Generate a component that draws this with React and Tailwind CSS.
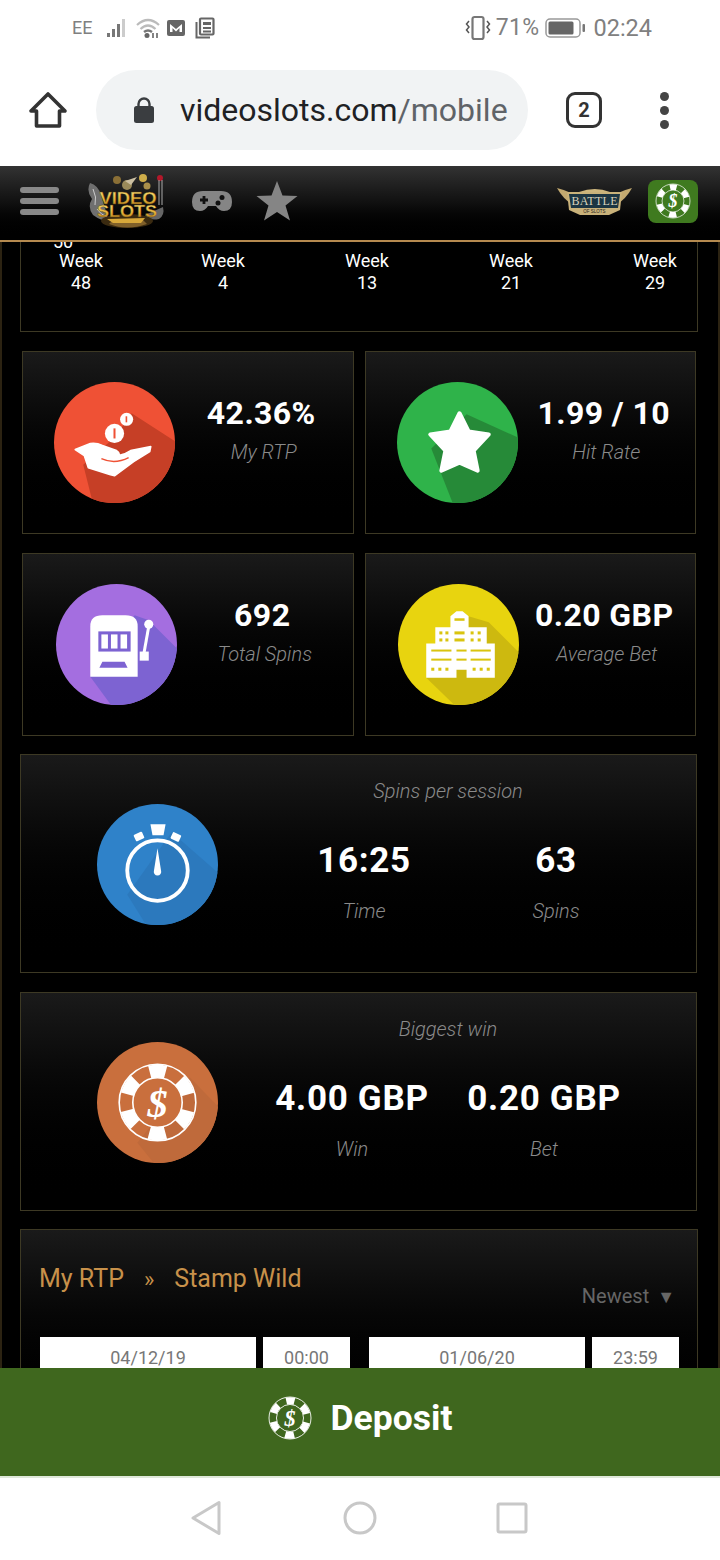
import React from "react";

const R = { fontFamily: "Roboto, 'Liberation Sans', sans-serif" };

function Disc({ id, color, shadow, points, children, className = "" }) {
  return (
    <svg viewBox="0 0 120 120" className={`w-[121px] h-[121px] shrink-0 ${className}`}>
      <defs>
        <clipPath id={id}><circle cx="60" cy="60" r="60" /></clipPath>
      </defs>
      <circle cx="60" cy="60" r="60" fill={color} />
      <polygon points={points} fill={shadow} clipPath={`url(#${id})`} />
      {children}
    </svg>
  );
}

function ChipArt({ cx, cy, r, bg, fg = "#fff" }) {
  const k = r / 38;
  const rb = 31 * k;
  const c = 2 * Math.PI * rb;
  const unit = c / 6;
  return (
    <g>
      <circle cx={cx} cy={cy} r={r} fill="none" stroke={fg} strokeWidth={1.6 * k} />
      <circle cx={cx} cy={cy} r={rb} fill="none" stroke={fg} strokeWidth={13 * k}
        strokeDasharray={`${unit * 0.5} ${unit * 0.5}`} strokeDashoffset={unit * 0.25}
        transform={`rotate(-90 ${cx} ${cy})`} />
      <circle cx={cx} cy={cy} r={24.5 * k} fill={bg} stroke={fg} strokeWidth={1.6 * k} />
      <text x={cx} y={cy + 14 * k} textAnchor="middle" fontSize={40 * k} fontWeight="700" fontStyle="italic"
        fill={fg} fontFamily="'Liberation Serif', serif">$</text>
    </g>
  );
}

const HandIcon = () => (
  <Disc id="c1" color="#ef5135" shadow="#c63f26" points="77,31 122,60 122,122 39,122 29,82 60,55">
    <path d="M21 67 L36 61 Q42 60 48 63 L62 68 Q66 71 64 73 Q70 72 76 68 L96 64 L95 69 L79 79 L60 93 L56 92 L34 85 L30 73 Z" fill="#fff" stroke="#fff" strokeWidth="1.500" strokeLinejoin="round" />
    <path d="M47 76 Q60 82 74 75" stroke="#ef5135" strokeWidth="1.500" fill="none" />
    <circle cx="60" cy="51" r="9.500" fill="#fff" />
    <rect x="59" y="46" width="2" height="10" fill="#ef5135" />
    <circle cx="72" cy="37" r="6.500" fill="#fff" />
    <rect x="71" y="34" width="1.600" height="6" fill="#ef5135" />
  </Disc>
);

const StarIcon = () => (
  <Disc id="c2" color="#2fb34a" shadow="#268a38" points="69,32 122,56 122,122 56,122 34,66">
    <polygon points="62,31 71,49 91,52 76,68 80,88 62,80 44,88 48,68 33,52 53,49" fill="#fff" stroke="#fff" strokeWidth="4" strokeLinejoin="round" />
  </Disc>
);

const SlotIcon = () => (
  <Disc id="c3" color="#a46ee0" shadow="#7d63d2" points="78,31 92,36 122,66 122,122 56,122 34,92">
    <path d="M34 42 Q34 31 46 31 L69 31 Q81 31 81 42 L81 92 L34 92 Z" fill="#fff" />
    <rect x="42" y="47" width="32" height="20" fill="#7d63d2" />
    <rect x="45" y="50" width="6.500" height="14" fill="#fff" />
    <rect x="54.500" y="50" width="6.500" height="14" fill="#fff" />
    <rect x="64" y="50" width="6.500" height="14" fill="#fff" />
    <polygon points="46,77 68,77 71,83 43,83" fill="#7d63d2" />
    <circle cx="92" cy="40" r="4.500" fill="#fff" />
    <path d="M92 42 L87 70" stroke="#fff" strokeWidth="3" />
    <rect x="83" y="67" width="9" height="9" fill="#fff" />
  </Disc>
);

const BuildingIcon = () => (
  <Disc id="c4" color="#e8d40f" shadow="#cdb90f" points="70,32 90,38 122,70 122,122 58,122 28,93">
    <path d="M28 59 H37 V43 H52 V32 L58 27 H64 L70 32 V43 H88 V59 H96 V93 H68 V85 H58 V93 H28 Z" fill="#fff" />
    <g fill="#d9c40f">
      <rect x="56" y="34" width="10" height="2.500" />
      <rect x="41" y="47" width="3" height="3" /><rect x="47" y="47" width="3" height="3" />
      <rect x="56" y="47" width="10" height="3" />
      <rect x="72" y="47" width="3" height="3" /><rect x="79" y="47" width="3" height="3" />
      <rect x="41" y="54" width="3" height="3" /><rect x="47" y="54" width="3" height="3" />
      <rect x="56" y="54" width="10" height="3" />
      <rect x="72" y="54" width="3" height="3" /><rect x="79" y="54" width="3" height="3" />
      <rect x="33" y="65" width="20" height="2" /><rect x="58" y="65" width="10" height="2" /><rect x="72" y="65" width="20" height="2" />
      <rect x="33" y="74" width="20" height="2" /><rect x="58" y="74" width="10" height="2" /><rect x="72" y="74" width="20" height="2" />
      <rect x="33" y="83" width="3" height="3" /><rect x="40" y="83" width="3" height="3" /><rect x="47" y="83" width="3" height="3" />
      <rect x="74" y="83" width="3" height="3" /><rect x="81" y="83" width="3" height="3" /><rect x="88" y="83" width="3" height="3" />
    </g>
  </Disc>
);

const WatchIcon = () => (
  <Disc id="c5" color="#2f82c9" shadow="#2c79bd" points="74,28 122,70 122,122 50,122 30,90">
    <circle cx="60" cy="66" r="30" fill="none" stroke="#fff" strokeWidth="3.800" />
    <polygon points="53,20 68,20 66,31 55,31" fill="#fff" />
    <rect x="37" y="29" width="9" height="7" rx="1" fill="#fff" transform="rotate(-25 41 32)" />
    <rect x="74" y="29" width="9" height="7" rx="1" fill="#fff" transform="rotate(25 78 32)" />
    <path d="M60 44 L63.500 66 A3.700 3.700 0 1 1 56.500 66 Z" fill="#fff" />
  </Disc>
);

const ChipIcon = () => (
  <Disc id="c6" color="#c96f3d" shadow="#bf6a3b" points="92,35 122,66 122,122 58,122 40,100">
    <ChipArt cx={60} cy={60} r={38} bg="#c96f3d" />
  </Disc>
);

function StatCard({ icon, value, label, iconMl = "ml-[31px]" }) {
  return (
    <div className="h-[183px] bg-gradient-to-b from-[#1a1a1a] to-black border border-[#3d3924] flex items-center">
      <div className={`${iconMl} shrink-0`}>{icon}</div>
      <div className="flex-1 flex flex-col items-center -mt-[22px]">
        <div className="text-[32px] leading-[40px] font-bold text-white tracking-[0.4px] pr-[5px] whitespace-nowrap">{value}</div>
        <div className="text-[20px] leading-[38px] italic font-light text-[#8a8a8a] whitespace-nowrap">{label}</div>
      </div>
    </div>
  );
}

function WideCard({ icon, title, cols, shift }) {
  return (
    <div className="ml-[18px] w-[677px] h-[219px] bg-gradient-to-b from-[#1a1a1a] to-black border border-[#3d3924] flex">
      <div className="ml-[76px] shrink-0 flex items-center pt-[2px]">{icon}</div>
      <div className="w-[460px] flex flex-col items-center pt-[22px]">
        <div className="text-[20px] leading-[28px] italic font-light text-[#8a8a8a]">{title}</div>
        <div className={`mt-[35px] grid grid-cols-2 w-[384px] ${shift}`}>
          {cols.map((c) => (
            <div key={c[1]} className="flex flex-col items-center">
              <div className="text-[35px] leading-[42px] font-bold text-white tracking-[0.7px] whitespace-nowrap">{c[0]}</div>
              <div className="mt-[14px] text-[20px] leading-[30px] italic font-light text-[#8a8a8a]">{c[1]}</div>
            </div>
          ))}
        </div>
      </div>
    </div>
  );
}

function DateBox({ w, children, className = "" }) {
  return (
    <div className={`${w} h-[40px] bg-white text-[#777] text-[18px] leading-[42px] text-center shrink-0 ${className}`}>{children}</div>
  );
}

function StatusIcons() {
  return (
    <div className="flex items-center">
      <svg width="22" height="22" viewBox="0 0 22 22" className="ml-[14px]">
        <rect x="1" y="16" width="3" height="4" fill="#777" />
        <rect x="6" y="12" width="3" height="8" fill="#777" />
        <rect x="11" y="7" width="3" height="13" fill="#777" />
        <rect x="16" y="2" width="3" height="18" fill="#ccc" />
      </svg>
      <svg width="24" height="22" viewBox="0 0 24 22" className="ml-[8px]" fill="none">
        <path d="M1 8 Q12 -2 23 8" stroke="#bbb" strokeWidth="2.200" />
        <path d="M4.500 12 Q12 5 19.500 12" stroke="#bbb" strokeWidth="2.200" />
        <path d="M8 15 Q12 12 16 15" stroke="#777" strokeWidth="2.500" />
        <circle cx="11" cy="18.500" r="2.500" fill="#666" />
        <path d="M17 16 V21 M21 16 V21" stroke="#777" strokeWidth="1.800" />
      </svg>
      <svg width="20" height="18" viewBox="0 0 20 18" className="ml-[6px]">
        <rect x="1" y="1" width="18" height="16" rx="2" fill="#666" />
        <path d="M4 5 L10 10 L16 5 V13 H13.500 V9 L10 12.500 L6.500 9 V13 H4 Z" fill="#fff" />
      </svg>
      <svg width="20" height="22" viewBox="0 0 20 22" className="ml-[9px]" fill="none">
        <rect x="5" y="1.500" width="13.500" height="16" rx="1" stroke="#666" strokeWidth="2.200" />
        <path d="M1.500 5 V20.500 H15" stroke="#666" strokeWidth="2" />
        <rect x="8" y="5" width="8" height="3" fill="#666" />
        <rect x="8" y="10" width="8" height="2" fill="#666" />
        <rect x="8" y="13.500" width="8" height="2" fill="#666" />
      </svg>
    </div>
  );
}

function Logo() {
  return (
    <svg width="80" height="60" viewBox="0 0 80 60" className="ml-[28px] shrink-0">
      <defs>
        <linearGradient id="lg" x1="0" y1="0" x2="0" y2="1">
          <stop offset="0" stopColor="#f8e07a" />
          <stop offset="0.6" stopColor="#e2ae35" />
          <stop offset="1" stopColor="#a8741c" />
        </linearGradient>
      </defs>
      <path d="M3 12 Q-1 20 5 28 Q0 36 6 44 Q14 50 22 50 L14 24 Q11 14 3 12 Z" fill="#6f6f6f" />
      <path d="M6 18 Q10 26 8 34 M10 38 Q14 44 20 46" stroke="#ccc" strokeWidth="1" fill="none" />
      <path d="M76 36 Q78 44 72 48 Q62 50 58 44 Z" fill="#666" />
      <ellipse cx="40" cy="50" rx="26" ry="7" fill="#3a2a10" />
      <path d="M22 53 Q40 60 60 53 L56 49 H26 Z" fill="#80602a" />
      <path d="M20 48 L58 47 L54 52 H26 Z" fill="#d8a83a" />
      <circle cx="30" cy="9" r="4" fill="#8a6f36" />
      <circle cx="40" cy="14" r="5" fill="#9a8a5a" />
      <circle cx="56" cy="7" r="4" fill="#cfae4a" />
      <circle cx="60" cy="15" r="3.500" fill="#a98f4a" />
      <path d="M38 10 L50 6 L44 14 Z" fill="#cbbfa2" />
      <circle cx="73" cy="7" r="3" fill="#b3182a" />
      <path d="M72 9 V34 M75 9 V34" stroke="#aaa" strokeWidth="1" />
      <text x="41" y="33" textAnchor="middle" fontSize="16" fontWeight="700" fill="url(#lg)" stroke="#5c3d0c" strokeWidth="0.300" fontFamily="'Liberation Sans', sans-serif" textLength="57" lengthAdjust="spacingAndGlyphs">VIDEO</text>
      <text x="40" y="46" textAnchor="middle" fontSize="16" fontWeight="700" fill="url(#lg)" stroke="#5c3d0c" strokeWidth="0.300" fontFamily="'Liberation Sans', sans-serif" textLength="60" lengthAdjust="spacingAndGlyphs">SLOTS</text>
    </svg>
  );
}

function BattleLogo() {
  return (
    <svg width="76" height="28" viewBox="0 0 76 28" className="shrink-0">
      <path d="M0 1 Q8 3 14 6 L16 18 Q6 12 0 1 Z" fill="#c4aa70" />
      <path d="M75 1 Q67 3 61 6 L59 18 Q69 12 75 1 Z" fill="#c4aa70" />
      <path d="M22 5 Q38 -1 53 5 Z" fill="#cdb67d" />
      <path d="M10 5 H65 L63 23 L52 28 H23 L12 23 Z" fill="#c9b27a" />
      <path d="M12 7 H63 L61 21 H14 Z" fill="#1b3542" />
      <text x="37.500" y="18" textAnchor="middle" fontSize="12" fill="#d8d2bb" fontFamily="'Liberation Serif', serif" textLength="46" lengthAdjust="spacing">BATTLE</text>
      <text x="37.500" y="25.800" textAnchor="middle" fontSize="4.500" fill="#27231a" fontFamily="'Liberation Sans', sans-serif">OF SLOTS</text>
    </svg>
  );
}

export default function App() {
  return (
    <div style={R} className="w-[720px] h-[1560px] flex flex-col overflow-hidden bg-white">
      {/* status bar */}
      <div className="h-[56px] flex items-center pl-[72px] pr-[68px] text-[#808080] shrink-0">
        <span className="text-[18px] leading-[22px]">EE</span>
        <StatusIcons />
        <div className="ml-auto flex items-center">
          <svg width="26" height="26" viewBox="0 0 26 26" fill="none">
            <rect x="7.500" y="2" width="11" height="22" rx="2" stroke="#777" strokeWidth="2.200" />
            <path d="M4 6 L1.500 9 L4 12 L1.500 15 L4 18" stroke="#555" strokeWidth="1.500" />
            <path d="M22 6 L24.500 9 L22 12 L24.500 15 L22 18" stroke="#555" strokeWidth="1.500" />
          </svg>
          <span className="ml-[5px] text-[23px] leading-[28px] tracking-[0.3px]">71%</span>
          <svg width="42" height="22" viewBox="0 0 42 22" className="ml-[6px]" fill="none">
            <rect x="1" y="2" width="34" height="18" rx="4" stroke="#999" strokeWidth="1.500" />
            <rect x="3.500" y="4.500" width="25" height="13" rx="1.500" fill="#666" />
            <rect x="37.500" y="7" width="2.500" height="8" rx="1" fill="#777" />
          </svg>
          <span className="ml-[6px] text-[23.500px] leading-[28px]">02:24</span>
        </div>
      </div>
      {/* browser bar */}
      <div className="h-[110px] flex items-center shrink-0 pb-[2px]">
        <svg width="40" height="40" viewBox="0 0 40 40" className="ml-[28px]" fill="none">
          <path d="M20 4 L37 21 H31.500 V36 H8.500 V21 H3 Z" stroke="#333" strokeWidth="3.600" strokeLinejoin="round" />
        </svg>
        <div className="ml-[28px] w-[432px] h-[80px] rounded-full bg-[#f1f3f4] flex items-center pl-[37px]">
          <svg width="22" height="28" viewBox="0 0 22 28">
            <path d="M5.500 12 V8 A5.500 5.500 0 0 1 16.500 8 V12" fill="none" stroke="#3a3d40" strokeWidth="2.400" />
            <rect x="1" y="10" width="20" height="17" rx="2.500" fill="#3a3d40" />
          </svg>
          <span className="ml-[25px] text-[32px] leading-[40px] text-[#202124] whitespace-nowrap">
            videoslots.com<span className="text-[#5f6368]">/mobile</span>
          </span>
        </div>
        <div className="ml-[38px] w-[36px] h-[36px] rounded-[9px] border-[3.500px] border-[#333] flex items-center justify-center text-[20px] font-bold text-[#333]">2</div>
        <div className="ml-[58px] flex flex-col gap-[5px]">
          <div className="w-[9px] h-[9px] rounded-full bg-[#444]" />
          <div className="w-[9px] h-[9px] rounded-full bg-[#444]" />
          <div className="w-[9px] h-[9px] rounded-full bg-[#444]" />
        </div>
      </div>
      {/* site header */}
      <div className="h-[76px] shrink-0 bg-gradient-to-b from-[#333] via-[#101010] to-black border-b-2 border-[#b58a4f] flex items-center pb-[4px]">
        <div className="ml-[20px] flex flex-col gap-[5px]">
          <div className="w-[39px] h-[6px] rounded-full bg-[#888]" />
          <div className="w-[39px] h-[6px] rounded-full bg-[#888]" />
          <div className="w-[39px] h-[6px] rounded-full bg-[#888]" />
        </div>
        <Logo />
        <svg width="42" height="24" viewBox="0 0 42 24" className="ml-[24px] shrink-0">
          <path d="M12 2 H30 Q41 2 41 13 Q41 22 33 22 Q28 22 25 17 H17 Q14 22 9 22 Q1 22 1 13 Q1 2 12 2 Z" fill="#858585" />
          <path d="M9 11 H17 M13 7 V15" stroke="#111" strokeWidth="2.800" />
          <circle cx="31" cy="8.500" r="2.500" fill="#111" />
          <circle cx="27" cy="14" r="2.500" fill="#111" />
        </svg>
        <svg width="42" height="40" viewBox="0 0 42 40" className="ml-[23px] shrink-0">
          <polygon points="21,0 26.500,14.500 41.500,15 29.500,24.500 34,39.500 21,31 8,39.500 12.500,24.500 0.500,15 15.500,14.500" fill="#858585" />
        </svg>
        <div className="ml-auto flex items-center pr-[22px]">
          <BattleLogo />
          <div className="ml-[15px] w-[50px] h-[43px] rounded-[8px] bg-[#3f7a1f] flex items-center justify-center">
            <svg width="36" height="36" viewBox="0 0 36 36"><ChipArt cx={18} cy={18} r={17} bg="#3f7a1f" /></svg>
          </div>
        </div>
      </div>
      {/* scrolling content */}
      <div className="flex-1 min-h-0 overflow-hidden bg-black border-x-2 border-[#2c2312]">
        <div className="ml-[18px] w-[678px] h-[90px] border-x border-b border-[#3d3924] overflow-hidden text-white text-[18px] leading-[22px]">
          <div className="-mt-[11px] ml-[32px] h-[19px]">50</div>
          <div className="flex -ml-[10px] w-[720px]">
            {[["Week", "48", "w-[140px]"], ["Week", "4", "w-[144px]"], ["Week", "13", "w-[144px]"], ["Week", "21", "w-[144px]"], ["Week", "29", "w-[144px]"]].map((w) => (
              <div key={w[1]} className={`${w[2]} text-center`}>
                <div>{w[0]}</div>
                <div>{w[1]}</div>
              </div>
            ))}
          </div>
        </div>
        <div className="mt-[19px] ml-[20px] w-[674px] grid grid-cols-2 gap-x-[11px] gap-y-[19px]">
          <StatCard icon={<HandIcon />} value="42.36%" label="My RTP" />
          <StatCard icon={<StarIcon />} value="1.99 / 10" label="Hit Rate" />
          <StatCard icon={<SlotIcon />} value="692" label="Total Spins" iconMl="ml-[33px]" />
          <StatCard icon={<BuildingIcon />} value="0.20 GBP" label="Average Bet" iconMl="ml-[32px]" />
        </div>
        <div className="mt-[18px]">
          <WideCard icon={<WatchIcon />} title="Spins per session" cols={[["16:25", "Time"], ["63", "Spins"]]} shift="ml-[24px]" />
        </div>
        <div className="mt-[19px]">
          <WideCard icon={<ChipIcon />} title="Biggest win" cols={[["4.00 GBP", "Win"], ["0.20 GBP", "Bet"]]} shift="" />
        </div>
        <div className="mt-[18px] ml-[18px] w-[678px] h-[200px] bg-gradient-to-b from-[#1a1a1a] to-black border border-[#3d3924] pt-[32px]">
          <div className="flex pl-[18px] pr-[22px]">
            <div className="text-[25px] leading-[34px] text-[#c8914a] whitespace-nowrap">
              My RTP<span className="mx-[20px] text-[22px]">»</span>Stamp Wild
            </div>
            <div className="ml-auto mt-[19px] text-[20px] leading-[30px] text-[#666] whitespace-nowrap">
              Newest <span className="ml-[3px] text-[18px]">▼</span>
            </div>
          </div>
          <div className="mt-[25px] flex pl-[19px]">
            <DateBox w="w-[216px]">04/12/19</DateBox>
            <DateBox w="w-[87px]" className="ml-[7px]">00:00</DateBox>
            <DateBox w="w-[216px]" className="ml-[19px]">01/06/20</DateBox>
            <DateBox w="w-[87px]" className="ml-[7px]">23:59</DateBox>
          </div>
        </div>
      </div>
      {/* deposit */}
      <div className="h-[110px] shrink-0 bg-[#3f671e] border-b-2 border-[#dfe8da] flex items-center justify-center gap-[19px] pb-[8px]">
        <svg width="44" height="44" viewBox="0 0 44 44"><ChipArt cx={22} cy={22} r={21} bg="#3f671e" /></svg>
        <span className="text-[35.500px] leading-[44px] font-bold text-white">Deposit</span>
      </div>
      {/* nav */}
      <div className="h-[82px] shrink-0 bg-white flex items-center pb-[2px]">
        <svg width="32" height="36" viewBox="0 0 32 36" className="ml-[190px]" fill="none">
          <path d="M29 2.500 V33.500 L3 18 Z" stroke="#c8c8c8" strokeWidth="3" strokeLinejoin="round" />
        </svg>
        <svg width="34" height="34" viewBox="0 0 34 34" className="ml-[121px]" fill="none">
          <circle cx="17" cy="17" r="15" stroke="#c8c8c8" strokeWidth="3" />
        </svg>
        <svg width="32" height="32" viewBox="0 0 32 32" className="ml-[119px]" fill="none">
          <rect x="2" y="2" width="28" height="28" rx="1.500" stroke="#c8c8c8" strokeWidth="3" />
        </svg>
      </div>
    </div>
  );
}
